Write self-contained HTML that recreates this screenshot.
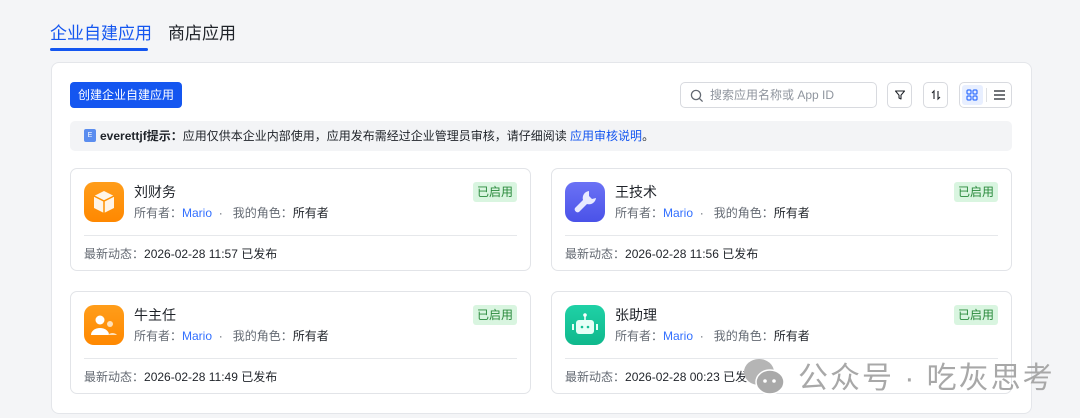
<!DOCTYPE html>
<html><head><meta charset="utf-8"><style>
*{box-sizing:border-box;margin:0;padding:0}
body{width:1080px;height:418px;background:#f4f5f7;font-family:"Liberation Sans","Noto Sans CJK SC",sans-serif;position:relative;overflow:hidden;color:#1f2329}
.abs{position:absolute}
.tab{font-size:17px;top:19px}
.panel{left:51px;top:62px;width:981px;height:352px;background:#fff;border:1px solid #e4e6ea;border-radius:8px}
.btn{left:70px;top:82px;width:112px;height:26px;background:#1456f0;border-radius:4px;color:#fff;font-size:12px;line-height:26px;text-align:center}
.box{border:1px solid #d8dadf;border-radius:5px;background:#fff;height:26px;top:82px}
.notice{left:70px;top:121px;width:942px;height:30px;background:#f3f4f6;border-radius:5px;font-size:12px;line-height:30px;padding-left:30px;color:#1f2329}
.card{width:461px;height:103px;border:1px solid #e2e4e8;border-radius:7px;background:#fff}
.ic{left:13px;top:13px;width:40px;height:40px;border-radius:10px}
.t{left:63px;top:13px;font-size:14px}
.o{left:63px;top:35px;font-size:12px;color:#646a73}
.o b{font-weight:normal;color:#3370ff}
.o i{font-style:normal;color:#1f2329}
.hr{left:13px;right:13px;top:66px;height:1px;background:#e6e8eb}
.f{left:13px;top:76px;font-size:12px;color:#646a73}
.f i{font-style:normal;color:#1f2329}
.bd{right:13px;top:13px;width:44px;height:20px;background:#d9f5e0;color:#2a8a3c;font-size:12px;line-height:20px;text-align:center;border-radius:3px}
</style></head><body>
<div class="abs tab" style="left:50px;color:#1456f0">企业自建应用</div>
<div class="abs" style="left:50px;top:48px;width:98px;height:3px;background:#1456f0;border-radius:2px"></div>
<div class="abs tab" style="left:168px;color:#1f2329">商店应用</div>
<div class="abs panel"></div>
<div class="abs btn">创建企业自建应用</div>
<div class="abs box" style="left:680px;width:197px;font-size:12px;color:#8f959e;line-height:24px;padding-left:29px">搜索应用名称或 App ID
<svg class="abs" style="left:9px;top:6px" width="14" height="14" viewBox="0 0 14 14"><circle cx="6" cy="6" r="4.6" fill="none" stroke="#646a73" stroke-width="1.3"/><path d="M9.4 9.4L12.6 12.6" stroke="#646a73" stroke-width="1.3"/></svg></div>
<div class="abs box" style="left:887px;width:25px"><svg class="abs" style="left:6px;top:6px" width="12" height="12" viewBox="0 0 12 12"><path d="M1.5 2h9L7 6.2V10L5 9V6.2Z" fill="none" stroke="#1f2329" stroke-width="1.1" stroke-linejoin="round"/></svg></div>
<div class="abs box" style="left:923px;width:25px"><svg class="abs" style="left:6px;top:6px" width="12" height="12" viewBox="0 0 12 12"><path d="M4 10V2L2 4M8 2v8l2-2" fill="none" stroke="#1f2329" stroke-width="1.1"/></svg></div>
<div class="abs box" style="left:959px;width:53px">
<div class="abs" style="left:2px;top:2px;width:21px;height:20px;background:#e8efff;border-radius:3px"></div>
<svg class="abs" style="left:6px;top:6px" width="12" height="12" viewBox="0 0 12 12"><g fill="none" stroke="#3370ff" stroke-width="1.2"><rect x="1" y="1" width="4" height="4" rx="1"/><rect x="7" y="1" width="4" height="4" rx="1"/><rect x="1" y="7" width="4" height="4" rx="1"/><rect x="7" y="7" width="4" height="4" rx="1"/></g></svg>
<div class="abs" style="left:26px;top:5px;width:1px;height:14px;background:#dee0e3"></div>
<svg class="abs" style="left:33px;top:6px" width="13" height="12" viewBox="0 0 13 12"><path d="M1 2h11M1 6h11M1 10h11" stroke="#1f2329" stroke-width="1.2"/></svg>
</div>
<div class="abs notice"><span class="abs" style="left:14px;top:8px;width:12px;height:13px;background:#5b8def;border-radius:2px;color:#fff;font-size:7px;line-height:13px;text-align:center">E</span><b>everettjf提示：</b>应用仅供本企业内部使用，应用发布需经过企业管理员审核，请仔细阅读 <span style="color:#1456f0">应用审核说明</span>。</div>

<div class="abs card" style="left:70px;top:168px">
<div class="abs ic" style="background:linear-gradient(#ff9d1a,#ff8800)"><svg width="40" height="40" viewBox="0 0 40 40"><path d="M20 9l10 5v12l-10 5-10-5V14z" fill="#fff" opacity=".9"/><path d="M10 14l10 5 10-5M20 19v12" stroke="#ff9100" stroke-width="1.5" fill="none"/></svg></div>
<div class="abs t">刘财务</div><div class="abs o">所有者：<b>Mario</b> &nbsp;·&nbsp;&nbsp; 我的角色：<i>所有者</i></div>
<div class="abs bd">已启用</div><div class="abs hr"></div><div class="abs f">最新动态：<i>2026-02-28 11:57 已发布</i></div></div>

<div class="abs card" style="left:551px;top:168px">
<div class="abs ic" style="background:linear-gradient(#6b72f5,#4a52e8)"><svg width="40" height="40" viewBox="0 0 40 40"><path d="M24 9a7 7 0 0 0-6 9L10 26a3 3 0 0 0 4 4l8-8a7 7 0 0 0 9-6l-4 1-3-3z" fill="#e8eaff"/></svg></div>
<div class="abs t">王技术</div><div class="abs o">所有者：<b>Mario</b> &nbsp;·&nbsp;&nbsp; 我的角色：<i>所有者</i></div>
<div class="abs bd">已启用</div><div class="abs hr"></div><div class="abs f">最新动态：<i>2026-02-28 11:56 已发布</i></div></div>

<div class="abs card" style="left:70px;top:291px">
<div class="abs ic" style="background:linear-gradient(#ff9d1a,#ff8800)"><svg width="40" height="40" viewBox="0 0 40 40"><circle cx="16" cy="15" r="4.5" fill="#fff"/><path d="M7 30a9 7 0 0 1 18 0z" fill="#fff"/><circle cx="26" cy="19" r="3" fill="#ffe0b8"/><path d="M24 30a6 6 0 0 1 9 0z" fill="#ffe0b8"/></svg></div>
<div class="abs t">牛主任</div><div class="abs o">所有者：<b>Mario</b> &nbsp;·&nbsp;&nbsp; 我的角色：<i>所有者</i></div>
<div class="abs bd">已启用</div><div class="abs hr"></div><div class="abs f">最新动态：<i>2026-02-28 11:49 已发布</i></div></div>

<div class="abs card" style="left:551px;top:291px">
<div class="abs ic" style="background:linear-gradient(#1fd1a6,#0fb88c)"><svg width="40" height="40" viewBox="0 0 40 40"><circle cx="20" cy="10" r="1.8" fill="#fff"/><path d="M20 11v4" stroke="#fff" stroke-width="1.5"/><rect x="11" y="15" width="18" height="14" rx="3" fill="#e6fff7"/><rect x="7" y="19" width="2" height="6" fill="#e6fff7"/><rect x="31" y="19" width="2" height="6" fill="#e6fff7"/><circle cx="17" cy="22" r="1.3" fill="#12bf94"/><circle cx="23" cy="22" r="1.3" fill="#12bf94"/></svg></div>
<div class="abs t">张助理</div><div class="abs o">所有者：<b>Mario</b> &nbsp;·&nbsp;&nbsp; 我的角色：<i>所有者</i></div>
<div class="abs bd">已启用</div><div class="abs hr"></div><div class="abs f">最新动态：<i>2026-02-28 00:23 已发布</i></div></div>

<svg class="abs" style="left:740px;top:355px" width="50" height="45" viewBox="0 0 50 45"><ellipse cx="19" cy="17" rx="15" ry="13" fill="#b5b5b5"/><ellipse cx="30" cy="27" rx="14" ry="12" fill="#a9a9a9" stroke="#fff" stroke-width="1.5"/><circle cx="25" cy="26" r="1.8" fill="#fff"/><circle cx="34" cy="26" r="1.8" fill="#fff"/></svg>
<div class="abs" style="left:798px;top:353px;font-size:30px;color:#a8a8a8;letter-spacing:2px">公众号 · 吃灰思考</div>
</body></html>
